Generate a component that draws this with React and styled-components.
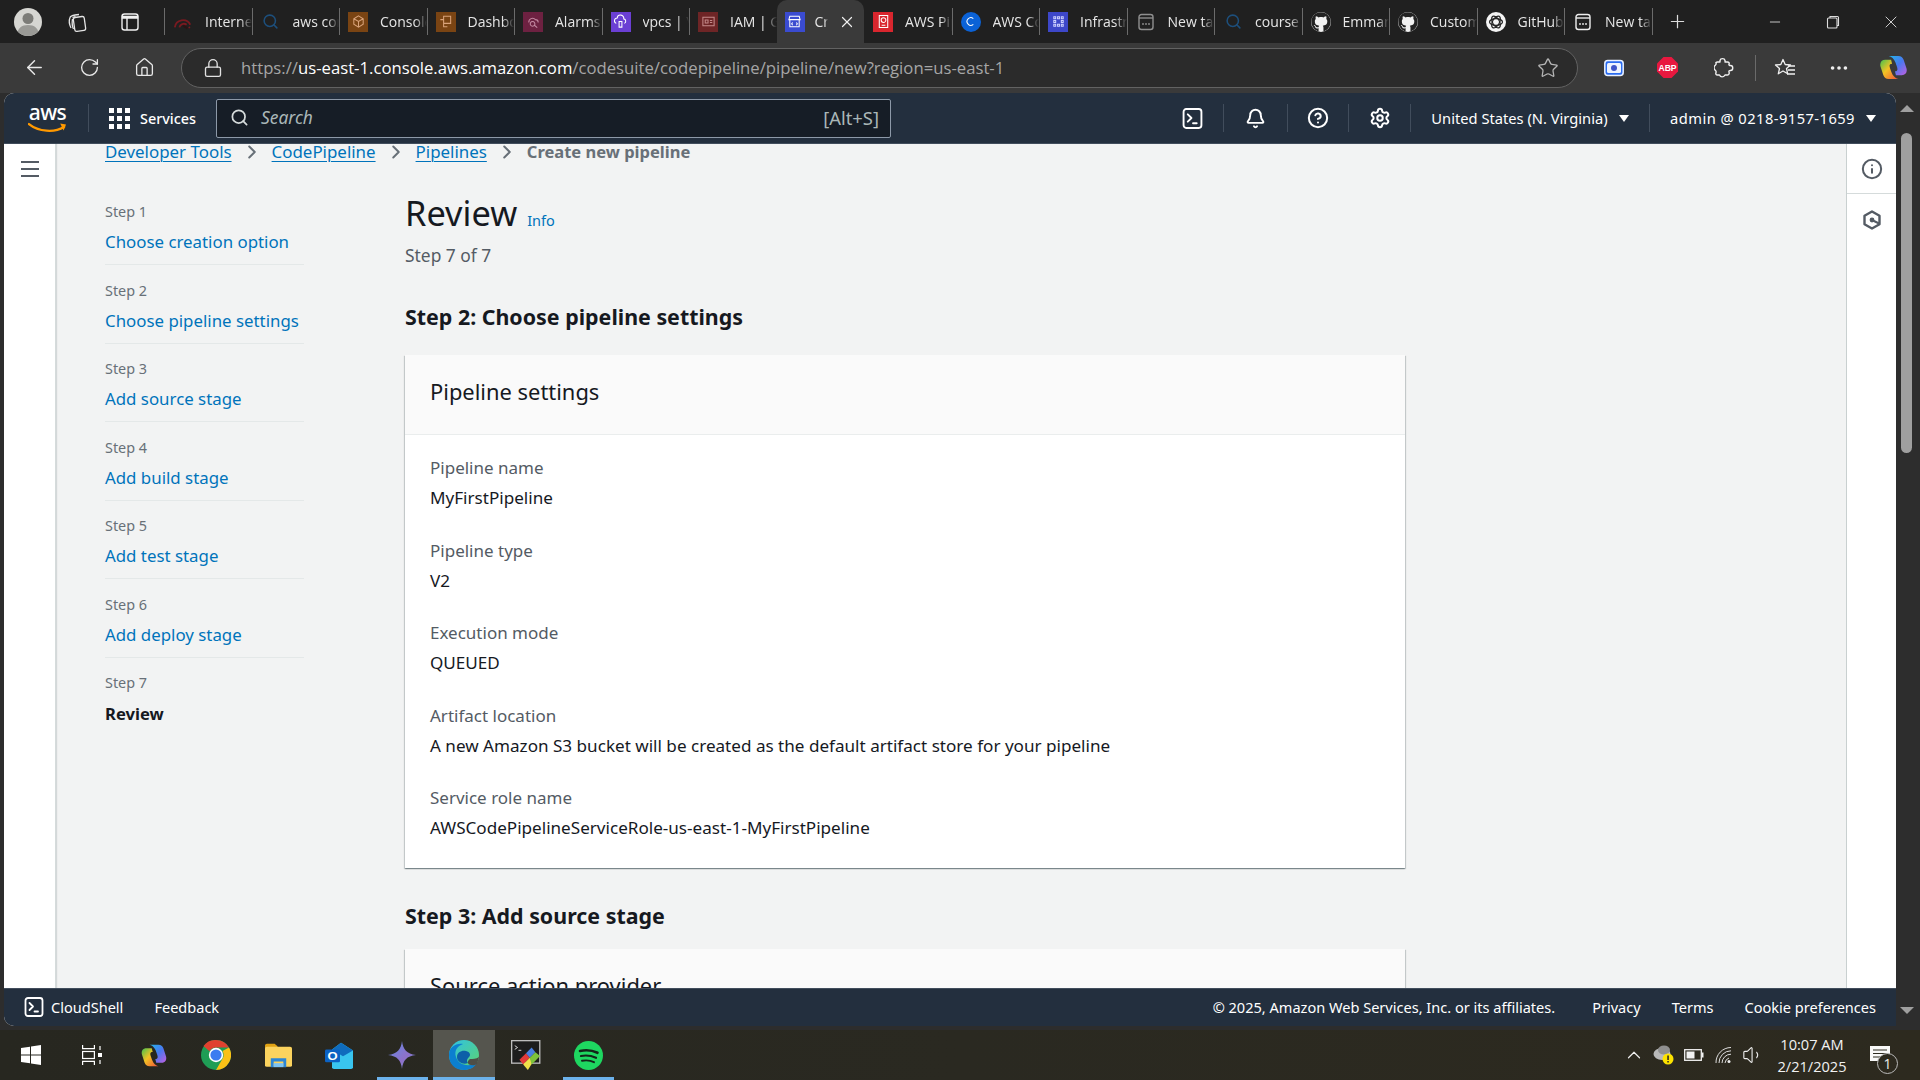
import React from "react";
import styled, { createGlobalStyle } from "styled-components";
import { ArrowLeft, RotateCw, Home, Lock, Star, Ellipsis, X, Plus, Minus, Bell, Settings, CircleHelp, Info, Search, ChevronRight, ChevronUp, Volume1 } from "lucide-react";
import { FaGithub } from "react-icons/fa";

const UI = `"Noto Sans", "Open Sans", sans-serif`;
const SEGOE = `"Open Sans", "Noto Sans", sans-serif`;

const Global = createGlobalStyle`
  html, body { margin: 0; padding: 0; height: 100%; overflow: hidden; background: #3a3a3a; }
  #root { height: 100%; }
  * { box-sizing: border-box; }
`;

const Screen = styled.div`
  width: 1920px; height: 1080px; display: flex; flex-direction: column; overflow: hidden;
  font-family: ${UI}; background: #3a3a3a;
`;

/* ---------- Tab strip ---------- */
const TabBar = styled.div`
  height: 43px; background: #202020; display: flex; align-items: stretch; flex: none;
`;
const WinCluster = styled.div`
  width: 164px; flex: none; display: flex; align-items: center; padding-left: 14px; color: #e8e8e8;
`;
const Avatar = styled.div`
  width: 28px; height: 28px; border-radius: 50%; background: #d6d6d2; overflow: hidden; flex: none;
  svg { display: block; }
`;
const WinIcon = styled.div`
  width: 24px; height: 24px; display: flex; align-items: center; justify-content: center; margin-left: ${p => p.$ml}px;
`;
const Tab = styled.div`
  width: ${p => p.$w || 87.5}px; flex: none; height: 43px; position: relative; display: flex; align-items: center;
  padding-left: ${p => p.$active ? 8 : 9}px; gap: ${p => p.$active ? 10 : 12}px; color: #e6e6e6; font: 400 14px ${SEGOE};
  background: ${p => p.$active ? "#3a3a3a" : "transparent"};
  border-radius: ${p => p.$active ? "10px 10px 0 0" : "0"};
  &::before {
    content: ""; position: absolute; left: 0; top: 8px; height: 27px; width: 1px;
    background: ${p => p.$active || p.$noSep ? "transparent" : "#6b6b6b"};
  }
`;
const TabIconBox = styled.div`
  width: 20px; height: 20px; flex: none; display: flex; align-items: center; justify-content: center;
  background: ${p => p.$bg || "transparent"};
  border-radius: ${p => p.$round ? "50%" : "0"};
`;
const TabLabel = styled.span`
  flex: 1; min-width: 0; overflow: hidden; white-space: nowrap;
  -webkit-mask-image: linear-gradient(90deg, #000 75%, transparent 100%);
  mask-image: linear-gradient(90deg, #000 75%, transparent 100%);
`;
const TabClose = styled.span`
  width: 18px; flex: none; display: flex; margin-right: 8px; color: #eee;
`;
const NewTab = styled.div`
  width: 52px; display: flex; align-items: center; justify-content: center; color: #ddd; position: relative;
  &::before { content: ""; position: absolute; left: 0; top: 8px; height: 27px; width: 1px; background: #6b6b6b; }
`;
const WinControls = styled.div`
  margin-left: auto; display: flex; color: #ddd;
`;
const WinControl = styled.div`
  width: 58px; display: flex; align-items: center; justify-content: center; height: 43px;
`;

/* ---------- Address bar ---------- */
const Toolbar = styled.div`
  height: 50px; flex: none; background: #3a3a3a; display: flex; align-items: center; padding-bottom: 1px; color: #e8e8e8;
`;
const NavButton = styled.div`
  width: ${p => p.$w}px; padding-left: ${p => p.$pl || 0}px; display: flex; justify-content: center; flex: none;
`;
const AddressBar = styled.div`
  width: 1397px; height: 40px; flex: none; margin-left: 9px; border: 1px solid #626262; border-radius: 20px; background: #2b2b2b;
  display: flex; align-items: center; padding: 0 18px 0 21px; color: #e2e2e2;
`;
const Url = styled.div`
  margin-left: 18px; flex: 1; font: 400 16.72px ${SEGOE}; color: #a6a6a6; white-space: nowrap;
  b { font-weight: 400; color: #fff; }
`;
const ExtensionRow = styled.div`
  display: flex; align-items: center; margin-left: 9px; color: #eee; flex: 1;
`;
const Extension = styled.div`
  width: ${p => p.$w}px; display: flex; justify-content: center; flex: none;
`;
const ExtSep = styled.div`
  width: 1px; height: 26px; background: #6a6a6a; flex: none;
`;

/* ---------- Console viewport ---------- */
const Viewport = styled.div`
  flex: 1; min-height: 0; display: flex; padding-left: 4px; background: #2d2d2d;
`;
const ConsoleWin = styled.div`
  flex: 1; min-width: 0; display: flex; flex-direction: column; background: #fff; border-radius: 10px 10px 0 10px; overflow: hidden;
`;
const Scrollbar = styled.div`
  width: 24px; flex: none; background: #2d2d2d; display: flex; flex-direction: column; align-items: center; position: relative;
`;
const ScrollThumb = styled.div`
  width: 11px; height: 320px; margin: 40px 3px 0 0; background: #9f9f9f; border-radius: 6px;
`;
const ScrollArrowUp = styled.div`
  position: absolute; top: 12px; left: 3.5px; width: 0; height: 0;
  border-left: 7px solid transparent; border-right: 7px solid transparent; border-bottom: 7px solid #9f9f9f;
`;
const ScrollArrowDown = styled.div`
  position: absolute; bottom: 12px; left: 3.5px; width: 0; height: 0;
  border-left: 7px solid transparent; border-right: 7px solid transparent; border-top: 7px solid #9f9f9f;
`;

/* ---------- AWS header ---------- */
const AwsHeader = styled.header`
  height: 51px; flex: none; background: #232f3e; display: flex; align-items: center; color: #fff;
  border-bottom: 1px solid #414d5c;
`;
const Logo = styled.div`
  width: 39px; margin-left: 24px; flex: none; display: flex; flex-direction: column; align-items: center; position: relative; height: 32px;
`;
const LogoWord = styled.span`
  font: 500 21px/20px ${UI}; letter-spacing: -0.6px; color: #fff;
`;
const LogoSmile = styled.svg`
  position: absolute; left: 0; bottom: 0;
`;
const HeadSep = styled.div`
  width: 1px; height: 28px; background: #414d5c; flex: none; margin-left: ${p => p.$ml || 0}px;
`;
const ServicesBtn = styled.div`
  display: flex; align-items: center; margin-left: 20px; gap: 10px; font: 500 14.4px ${UI}; width: 107px; flex: none;
`;
const GridIcon = styled.div`
  width: 21px; height: 21px; display: grid; grid-template-columns: repeat(3, 5px); grid-template-rows: repeat(3, 5px); gap: 3px;
  i { background: #fff; display: block; }
`;
const SearchBox = styled.div`
  width: 675px; height: 39px; flex: none; background: #161d26; border: 1px solid #8d99a8; border-radius: 2px;
  display: flex; align-items: center; padding: 0 11px 2px 13px; color: #d5dbdb; gap: 12px;
`;
const SearchHint = styled.span`
  flex: 1; font: italic 400 17.4px ${UI}; color: #aab7b8;
`;
const SearchKey = styled.span`
  font: 400 18.4px ${UI}; color: #aab7b8;
`;
const HeadCell = styled.div`
  width: ${p => p.$w}px; flex: none; display: flex; align-items: center; justify-content: center; height: 28px;
  border-left: 1px solid #414d5c; gap: 6px; font: 400 14.7px ${UI}; white-space: nowrap;
  letter-spacing: ${p => p.$ls || 0}px;
`;
const ShellCell = styled.div`
  flex: 1; height: 28px; display: flex; align-items: center; justify-content: flex-end; padding-right: 20px;
`;
const Caret = styled.span`
  width: 0; height: 0; border-left: 5.5px solid transparent; border-right: 5.5px solid transparent; border-top: 7px solid #fff; margin-left: 5px;
`;

/* ---------- Body ---------- */
const Body = styled.div`
  flex: 1; min-height: 0; display: flex; background: #f2f3f3;
`;
const LeftRail = styled.aside`
  width: 52px; flex: none; background: #fff; border-right: 1px solid #d5dbdb; box-shadow: 1px 0 1px rgba(0,28,36,.12); display: flex; justify-content: center; padding-top: 17px;
`;
const Burger = styled.div`
  width: 18px; height: 16px; display: flex; flex-direction: column; justify-content: space-between;
  i { display: block; height: 2.4px; background: #545b64; }
`;
const RightRail = styled.aside`
  width: 50px; flex: none; background: #fff; border-left: 1px solid #c9d0d0; display: flex; flex-direction: column; color: #545b64;
`;
const RailBtn = styled.div`
  height: ${p => p.$h}px; display: flex; align-items: center; justify-content: center; border-bottom: ${p => p.$line ? "1px solid #d5dbdb" : "0"};
`;
const Main = styled.main`
  flex: 1; min-width: 0; overflow: hidden; padding-left: 49px;
`;
const Crumbs = styled.nav`
  height: 20px; display: flex; align-items: center; gap: 9px; font: 400 16.9px/20px ${UI}; margin-top: -2px; color: #687078;
`;
const CrumbLink = styled.a`
  color: #0073bb; text-decoration: underline; text-underline-offset: 3px; text-decoration-thickness: 1px; white-space: nowrap;
`;
const CrumbCurrent = styled.span`
  color: #687078; font-weight: 700; font-size: 16.5px; white-space: nowrap;
`;
const Columns = styled.div`
  display: flex;
`;
const StepNav = styled.ol`
  width: 199px; flex: none; margin: 38px 101px 0 0; padding: 0; list-style: none;
`;
const StepItem = styled.li`
  height: ${p => p.$last ? 55 : 65}px; margin-bottom: 13.5px; border-bottom: ${p => p.$last ? "0" : "1px solid #e4e8e8"};
`;
const StepLabel = styled.div`
  font: 400 14.4px/24px ${UI}; color: #687078; margin-bottom: ${p => p.$last ? 7 : 6}px;
`;
const StepLink = styled.div`
  font: ${p => p.$current ? 700 : 400} ${p => p.$current ? 16.6 : 16.85}px/24px ${UI}; color: ${p => p.$current ? "#16191f" : "#0073bb"}; white-space: nowrap;
`;
const Content = styled.div`
  width: 1000px; flex: none; padding-top: 29px;
`;
const TitleRow = styled.div`
  display: flex; align-items: baseline; gap: 10px;
`;
const H1 = styled.h1`
  margin: 0; font: 400 34.4px/44px ${UI}; color: #16191f;
`;
const InfoLink = styled.a`
  font: 400 14.5px ${UI}; color: #0073bb;
`;
const Sub = styled.div`
  margin-top: 8px; font: 400 17.4px/24px ${UI}; color: #545b64;
`;
const H2 = styled.h2`
  margin: ${p => p.$top}px 0 ${p => p.$bottom}px; font: 700 21.4px/30px ${UI}; color: #16191f;
`;
const Card = styled.section`
  background: #fff; box-shadow: 0 1px 1px 0 rgba(0,28,36,.3), 1px 1px 1px 0 rgba(0,28,36,.15), -1px 1px 1px 0 rgba(0,28,36,.15);
`;
const CardHead = styled.div`
  height: 80px; padding: 22px 25px 0; background: #fafafa; border-bottom: 1px solid #eaeded; font: 400 21.9px/30px ${UI}; color: #16191f;
`;
const CardBody = styled.div`
  padding: 21px 25px 28px; display: flex; flex-direction: column; gap: 28.6px;
`;
const Field = styled.div`
  display: flex; flex-direction: column; gap: 6px;
`;
const FieldLabel = styled.div`
  font: 400 17px/24px ${UI}; color: #545b64;
`;
const FieldValue = styled.div`
  font: 400 17.1px/24px ${UI}; color: #16191f;
`;

/* ---------- Footer ---------- */
const AwsFooter = styled.footer`
  height: 38px; flex: none; background: #232f3e; display: flex; align-items: center; color: #fff; padding: 0 20px 1px 20px; font: 400 14.55px ${UI};
  border-top: 1px solid #414d5c;
`;
const FootItem = styled.span`
  margin-left: ${p => p.$ml || 0}px; white-space: nowrap; display: flex; align-items: center; gap: 7px;
`;
const FootSpacer = styled.div`
  flex: 1;
`;
const BottomStrip = styled.div`
  height: 4px; flex: none; background: #2d2d2d;
`;

/* ---------- Taskbar ---------- */
const Taskbar = styled.div`
  height: 50px; flex: none; background: linear-gradient(90deg, #272720 0%, #2a2921 50%, #2d2a1f 100%); display: flex; align-items: stretch; color: #fff;
`;
const TaskItem = styled.div`
  width: ${p => p.$w || 62}px; flex: none; display: flex; align-items: center; justify-content: center; position: relative;
  background: ${p => p.$active ? "#55554e" : "transparent"};
  &::after {
    content: ""; position: absolute; bottom: 0; height: 3px; background: #6cb2eb;
    left: ${p => p.$active ? 0 : 5.5}px; right: ${p => p.$active ? 0 : 5.5}px; display: ${p => p.$on || p.$active ? "block" : "none"};
  }
`;
const Tray = styled.div`
  margin-left: auto; display: flex; align-items: center; color: #eee; padding-right: 15px;
`;
const TrayIcon = styled.div`
  width: ${p => p.$w || 30}px; display: flex; justify-content: center; flex: none;
`;
const Clock = styled.div`
  width: 86px; margin-left: 2px; text-align: center; font: 400 14.6px/22px ${SEGOE}; color: #f2f2f2;
`;
const Notify = styled.div`
  width: 50px; display: flex; justify-content: center; position: relative;
`;
const NotifyCount = styled.span`
  position: absolute; right: 7px; bottom: -9px; width: 21px; height: 21px; border-radius: 50%; border: 1px solid #bbb; background: #2d2a1f;
  display: flex; align-items: center; justify-content: center; font: 400 14px ${SEGOE}; color: #eee;
`;

/* ---------- Drawn icons ---------- */
const ShellIcon = ({ size = 20 }) => (
  <svg width={size} height={size} viewBox="0 0 20 20" fill="none" stroke="#fff" strokeWidth="1.8">
    <rect x="1.5" y="1" width="17" height="18" rx="2.5" />
    <path d="M5.5 6l3.5 3.5-3.5 3.5M10.5 14.5h3.5" strokeLinecap="round" strokeLinejoin="round" />
  </svg>
);
const AvatarArt = () => (
  <svg width="28" height="28" viewBox="0 0 28 28"><circle cx="14" cy="10.5" r="5.5" fill="#7c7c78" /><path d="M3 28c0-8 5-11 11-11s11 3 11 11z" fill="#9a9a96" /></svg>
);
const Workspaces = () => (
  <svg width="22" height="22" viewBox="0 0 22 22" fill="none" stroke="#e4e4e4" strokeWidth="1.3">
    <rect x="8" y="6" width="11" height="14" rx="2" transform="rotate(-8 13 13)" />
    <path d="M5 17C3 13 3 9 4 6.5 4.5 5 6 4.5 9 4l4-.5" /><path d="M7.5 18C6 15 6 11 6.5 8M6.5 6.5l3-1" />
  </svg>
);
const TabsIcon = () => (
  <svg width="20" height="20" viewBox="0 0 20 20" fill="none" stroke="#f0f0f0" strokeWidth="1.4">
    <rect x="2" y="2" width="16" height="16" rx="2.5" /><path d="M2.5 4.5h15V6h-15z" fill="#f0f0f0" /><path d="M7 6v12" />
  </svg>
);
const WifiRed = () => (
  <svg width="22" height="20" viewBox="0 0 22 20" fill="none" stroke="#7a1a20" strokeWidth="2">
    <path d="M2 16a9 9 0 0 1 17-3M7 16a5 5 0 0 1 8-3" /><path d="M11 14l5 3" stroke="#2c1214" />
    <circle cx="18" cy="16" r="1" fill="#7a1a20" stroke="none" />
  </svg>
);
const SearchBlue = () => <Search size={17} color="#1d4f7c" strokeWidth={2.2} />;
const Glyph = ({ d, c = "#d9a37a" }) => (
  <svg width="15" height="15" viewBox="0 0 16 16" fill="none" stroke={c} strokeWidth="1.1"><path d={d} /></svg>
);
const DocTab = ({ c = "#8f8f8f" }) => (
  <svg width="18" height="18" viewBox="0 0 18 18" fill="none" stroke={c} strokeWidth="1.4">
    <rect x="2" y="1.5" width="14" height="15" rx="2.5" /><path d="M2 5h14" /><path d="M6 11h.01M9 11h.01M12 11h.01" strokeWidth="1.8" strokeLinecap="round" />
  </svg>
);
const OpenAi = () => (
  <svg width="20" height="20" viewBox="0 0 20 20"><circle cx="10" cy="10" r="10" fill="#f4f4f4" />
    <g fill="none" stroke="#222" strokeWidth="1.2"><ellipse cx="10" cy="10" rx="6.5" ry="3.4" /><ellipse cx="10" cy="10" rx="6.5" ry="3.4" transform="rotate(60 10 10)" /><ellipse cx="10" cy="10" rx="6.5" ry="3.4" transform="rotate(120 10 10)" /></g>
  </svg>
);
const GithubRound = () => (
  <TabIconBox $bg="#f2f2f2" $round><FaGithub size={20} color="#222" /></TabIconBox>
);
const CameraExt = () => (
  <svg width="20" height="18" viewBox="0 0 20 18"><rect x="0.8" y="1.5" width="18.4" height="15" rx="3" fill="#2b6cf0" stroke="#e8f0ff" strokeWidth="1.5" /><rect x="3" y="4" width="14" height="10" rx="1.5" fill="#eef4ff" /><circle cx="10" cy="9" r="3" fill="#3f55c8" /></svg>
);
const AbpExt = () => (
  <svg width="21" height="21" viewBox="0 0 21 21"><path d="M6.5 0h8L21 6.5v8L14.5 21h-8L0 14.5v-8z" fill="#e8183f" /><text x="10.5" y="14" textAnchor="middle" fontFamily="'Liberation Sans',sans-serif" fontWeight="700" fontSize="8.6" fill="#fff">ABP</text></svg>
);
const PuzzleExt = () => (
  <svg width="20" height="22" viewBox="0 0 20 22" fill="none" stroke="#f0f0f0" strokeWidth="1.4" strokeLinejoin="round">
    <path d="M6 3.500c.5-2.500 4.500-2.500 5 0 .2 1 0 1.500 0 1.500h2.500c1.500 0 2 1 1.500 2-.3 1 .5 1.500 1.500 1.500 3 0 3 5 0 5-1 0-1.800.5-1.500 1.500.5 1.500 0 3-1.500 3h-2.500c-1.500 2.500-4.500 2.500-5.500 0H3.500c-1.500 0-2-1-1.500-2.500.5-1.500-.5-2-1-2.500-1.300-1-1.300-3.500 0-4.500.5-.5 1.500-1 1-2.500C1.500 6 2 5 3.500 5H6z" />
  </svg>
);
const FavExt = () => (
  <svg width="22" height="20" viewBox="0 0 22 20" fill="none" stroke="#f0f0f0" strokeWidth="1.3" strokeLinejoin="round">
    <path d="M9 1.500l2.200 5 5.300.5-4 3.500 1.200 5.300L9 13l-4.700 2.800 1.200-5.300-4-3.500 5.300-.5z" /><path d="M14 8h7M14 12h7M13 16h8" />
  </svg>
);
const Copilot = ({ w = 27, h = 27 }) => (
  <svg width={w} height={h} viewBox="0 0 28 28">
    <defs>
      <linearGradient id="cpa" x1="0" y1="0" x2="1" y2="1"><stop offset="0" stopColor="#22b6e8" /><stop offset=".5" stopColor="#4a78f0" /><stop offset="1" stopColor="#c05fe0" /></linearGradient>
      <linearGradient id="cpb" x1="0" y1="0" x2="1" y2="1"><stop offset="0" stopColor="#45c24f" /><stop offset=".45" stopColor="#f3c224" /><stop offset="1" stopColor="#f0503a" /></linearGradient>
    </defs>
    <path d="M9 2h10c3 0 4.500 1.500 5.500 4l3 9c1 4-1 7-5 7h-6l-1-4c3 0 3-2 2-5l-1-3c-1-3-3-7-7.500-8z" fill="url(#cpa)" />
    <path d="M19 26H9c-3 0-4.500-1.500-5.500-4l-3-9c-1-4 1-7 5-7h6l1 4c-3 0-3 2-2 5l1 3c1 3 3 7 7.500 8z" fill="url(#cpb)" />
  </svg>
);
const Chrome = () => (
  <svg width="30" height="30" viewBox="0 0 30 30">
    <circle cx="15" cy="15" r="15" fill="#1f9d55" />
    <path d="M15 0a15 15 0 0 1 13 7.500H15a7.500 7.500 0 0 0-6.500 3.750L2.500 6A15 15 0 0 1 15 0z" fill="#e0412f" />
    <path d="M28 7.500A15 15 0 0 1 15 30l6.500-11.250A7.500 7.500 0 0 0 21.500 11z" fill="#fbc116" />
    <circle cx="15" cy="15" r="7.200" fill="#fff" /><circle cx="15" cy="15" r="5.600" fill="#3b7df0" />
  </svg>
);
const Explorer = () => (
  <svg width="27" height="25" viewBox="0 0 28 31" preserveAspectRatio="none">
    <path d="M0 3a2 2 0 0 1 2-2h8l3 3v4H0z" fill="#e0a214" /><rect y="4.500" width="28" height="25" rx="2" fill="#fbd35e" />
    <path d="M6 19h16v11h-3v-7H9v7H6z" fill="#2b86d6" /><rect x="9" y="25" width="10" height="5" fill="#7cc4f5" />
  </svg>
);
const Outlook = () => (
  <svg width="30" height="27" viewBox="0 0 30 32" preserveAspectRatio="none">
    <path d="M7 9l9-8 12 9v20a2 2 0 0 1-2 2H9a2 2 0 0 1-2-2z" fill="#39c5ef" /><path d="M16 1l12 9-10 7-11-8z" fill="#0f6cbd" />
    <rect y="9" width="15" height="15" rx="1.500" fill="#0b62c4" /><text x="7.500" y="21" textAnchor="middle" fontFamily="'Liberation Sans',sans-serif" fontWeight="700" fontSize="13" fill="#fff">O</text>
  </svg>
);
const Gemini = () => (
  <svg width="28" height="28" viewBox="0 0 30 30">
    <defs><linearGradient id="gm" x1="0" y1="0" x2="1" y2="1"><stop offset="0" stopColor="#5f8de8" /><stop offset=".6" stopColor="#8f70c8" /><stop offset="1" stopColor="#5a9be0" /></linearGradient></defs>
    <path d="M15 0c1 9 5 14 15 15-10 1-14 6-15 15-1-9-5-14-15-15 10-1 14-6 15-15z" fill="url(#gm)" />
  </svg>
);
const Edge = () => (
  <svg width="30" height="30" viewBox="0 0 30 30">
    <defs><linearGradient id="ed" x1="0" y1="0" x2="1" y2="1"><stop offset="0" stopColor="#2ec2e8" /><stop offset="1" stopColor="#5fd36a" /></linearGradient></defs>
    <circle cx="15" cy="15" r="15" fill="url(#ed)" />
    <path d="M0 15C0 7 7 3 14 4 8 6 5 11 7 17c2 7 11 11 21 6-3 5-8 7-13 7C6 30 0 24 0 15z" fill="#0c7fd0" />
    <path d="M8 17c0-5 5-7 9-6 4 1 5 4 3 6-2 2-3 4-1 6-5 2-11-1-11-6z" fill="#0d5fa8" /><path d="M21 19c3 0 6 0 9-2l-2 7c-3 2-6 1-8 .5-2-2-1-4 1-5.500z" fill="#4e4e47" />
  </svg>
);
const AppTerm = () => (
  <svg width="30" height="30" viewBox="0 0 32 32">
    <rect x=".700" y=".700" width="30" height="24" fill="#1d1d1d" stroke="#bdbdbd" strokeWidth="1.400" />
    <path d="M4 6l3 2-3 2M8 11h3" stroke="#ddd" fill="none" strokeWidth="1" />
    <path d="M9 21l7-7 4 5-7 7z" fill="#e23a3a" /><path d="M16 14l6-6 4 5-6 6z" fill="#4a7fe0" /><path d="M13 26l7-7 3 5-5 8z" fill="#f0e04a" /><path d="M20 19l6-6 5 4-9 9z" fill="#7ec23c" />
  </svg>
);
const Spotify = () => (
  <svg width="29" height="29" viewBox="0 0 29 29">
    <circle cx="14.500" cy="14.500" r="14.500" fill="#1ed760" />
    <g fill="none" stroke="#14241a" strokeLinecap="round"><path d="M6 10c6-1.300 12-.8 17.500 1.800" strokeWidth="2.600" /><path d="M7 15c5-1 10-.5 15 1.800" strokeWidth="2.200" /><path d="M8 19.800c4-.7 8.500-.4 12 1.400" strokeWidth="1.900" /></g>
  </svg>
);
const WinLogo = () => (
  <svg width="20" height="20" viewBox="0 0 20 20" fill="#fff"><path d="M0 3l9-1.300v7.800H0zM10 1.500L20 0v9.500H10zM0 10.500h9v7.800L0 17zM10 10.500h10V20l-10-1.500z" /></svg>
);
const TaskView = () => (
  <svg width="20" height="20" viewBox="0 0 20 20" fill="none" stroke="#fff" strokeWidth="1.200"><path d="M.6 0v3.600h11.800V0M.6 20v-3.600h11.800V20" /><rect x=".6" y="6.500" width="11.800" height="7" /><path d="M18 1v4M18 15v4" /><rect x="16" y="8" width="4" height="4" fill="#fff" stroke="none" /></svg>
);
const CloudWarn = () => (
  <svg width="22" height="22" viewBox="0 0 22 22"><ellipse cx="9" cy="10" rx="8.500" ry="6" fill="#b9b9b9" /><ellipse cx="11" cy="6" rx="6" ry="4.500" fill="#8f8f8f" /><circle cx="15" cy="15" r="5.500" fill="#fde300" /><rect x="14.300" y="11.500" width="1.500" height="4.500" fill="#222" /><rect x="14.300" y="17" width="1.500" height="1.500" fill="#222" /></svg>
);
const Battery = () => (
  <svg width="20" height="12" viewBox="0 0 20 12" fill="none"><rect x=".700" y=".700" width="16.600" height="10.600" stroke="#f2f2f2" strokeWidth="1.300" /><rect x="2.500" y="2.500" width="8" height="7" fill="#f2f2f2" /><rect x="18" y="3.500" width="1.500" height="5" fill="#f2f2f2" /></svg>
);
const WifiTray = () => (
  <svg width="18" height="18" viewBox="0 0 18 18" fill="none" stroke="#ddd" strokeWidth="1"><path d="M1 17A15 15 0 0 1 16 1.500M4 17A12 12 0 0 1 16 4.800M7 17A9 9 0 0 1 16 8.200M10 17a6 6 0 0 1 4-5" /><circle cx="14" cy="15.500" r="1.500" fill="#eee" stroke="none" /></svg>
);
const NoteIcon = () => (
  <svg width="20" height="20" viewBox="0 0 20 20"><path d="M0 1h20v15h-6l-3 3v-3H0z" fill="#f8f8f8" /><path d="M3 5h14M3 8.500h14M3 12h14" stroke="#2d2a1f" strokeWidth="1.200" /></svg>
);
const HexIcon = () => (
  <svg width="20" height="20" viewBox="0 0 20 20" fill="none" stroke="#545b64" strokeWidth="2.400" strokeLinejoin="round"><path d="M10 1.500l7.500 4.200v8.600L10 18.500l-7.500-4.200V5.700z" /><circle cx="10" cy="10" r="2.400" fill="#545b64" stroke="none" /><path d="M10 10l7 3.500" stroke="#545b64" strokeWidth="2" /></svg>
);

const tabs = [
  { t: "Internet", icon: <WifiRed /> },
  { t: "aws console", icon: <SearchBlue /> },
  { t: "Console", bg: "#7a4413", icon: <Glyph d="M8 2l5 3v6l-5 3-5-3V5zM3 5l5 3 5-3M8 8v6" /> },
  { t: "Dashboard", bg: "#7a4413", icon: <Glyph d="M6 2.500h7.500V10H6zM2.500 6H6v7.500h4" /> },
  { t: "Alarms", bg: "#6d2141", icon: <Glyph c="#c48aa3" d="M3 9a4 4 0 0 1 7-3 3 3 0 0 1 3 3M7 8a2.500 2.500 0 1 0 .01 0M9 12l3 2.500" /> },
  { t: "vpcs | VPC", bg: "#6b3fd4", icon: <Glyph c="#fff" d="M3.500 10a3 3 0 0 1 1-5.800 3.500 3.500 0 0 1 7 1 2.500 2.500 0 0 1 .5 4.800M6.500 8h3v6h-3z" /> },
  { t: "IAM | Global", bg: "#6e2526", icon: <Glyph c="#c58a8a" d="M2 3.500h12v9H2zM4.500 6.500h3v3h-3zM9.500 7H12M9.500 9H12" /> },
  { t: "Create", active: true, bg: "#3a4bd0", icon: <Glyph c="#fff" d="M3 2.500h10l1 3.500H2zM3 6v7.500h10V6M6 9l-1 1.500L6 12M10 9l1 1.500L10 12" /> },
  { t: "AWS Pipeline", bg: "#d9262e", icon: <Glyph c="#fff" d="M3.500 1.500h9v13h-9zM5.500 6.500a2.500 2.500 0 1 0 5 0 2.500 2.500 0 1 0-5 0M6 12h4" /> },
  { t: "AWS Code", bg: "#0b62d6", round: true, icon: <Glyph c="#fff" d="M11 5a4 4 0 1 0 0 6" /> },
  { t: "Infrastructure", bg: "#3d47c9", icon: <Glyph c="#cfd3ff" d="M3 3h2v2H3zM7 3h2v2H7zM11 3h2v2h-2zM3 7h2v2H3zM11 7h2v2h-2zM3 11h2v2H3zM7 11h2v2H7zM11 11h2v2h-2z" /> },
  { t: "New tab", icon: <DocTab /> },
  { t: "course", icon: <SearchBlue /> },
  { t: "Emmanuel", icon: <GithubRound /> },
  { t: "Custom", icon: <GithubRound /> },
  { t: "GitHub", icon: <OpenAi /> },
  { t: "New tab", icon: <DocTab c="#efefef" /> },
];

const steps = [
  ["Step 1", "Choose creation option"],
  ["Step 2", "Choose pipeline settings"],
  ["Step 3", "Add source stage"],
  ["Step 4", "Add build stage"],
  ["Step 5", "Add test stage"],
  ["Step 6", "Add deploy stage"],
  ["Step 7", "Review"],
];

const fields = [
  ["Pipeline name", "MyFirstPipeline"],
  ["Pipeline type", "V2"],
  ["Execution mode", "QUEUED"],
  ["Artifact location", "A new Amazon S3 bucket will be created as the default artifact store for your pipeline"],
  ["Service role name", "AWSCodePipelineServiceRole-us-east-1-MyFirstPipeline"],
];

const Sep = styled(ChevronRight)`
  color: #687078; flex: none;
`;

export default function App() {
  return (
    <Screen>
      <Global />
      <TabBar>
        <WinCluster>
          <Avatar><AvatarArt /></Avatar>
          <WinIcon $ml={23}><Workspaces /></WinIcon>
          <WinIcon $ml={29}><TabsIcon /></WinIcon>
        </WinCluster>
        {tabs.map((t, i) => (
          <Tab key={i} $active={t.active} $noSep={tabs[i - 1] && tabs[i - 1].active}>
            <TabIconBox $bg={t.bg} $round={t.round}>{t.icon}</TabIconBox>
            <TabLabel>{t.t}</TabLabel>
            {t.active && <TabClose><X size={18} strokeWidth={1.6} /></TabClose>}
          </Tab>
        ))}
        <NewTab><Plus size={21} strokeWidth={1.4} /></NewTab>
        <WinControls>
          <WinControl><Minus size={16} strokeWidth={1.3} /></WinControl>
          <WinControl>
            <svg width="14" height="14" viewBox="0 0 14 14" fill="none" stroke="#ddd" strokeWidth="1.100"><rect x="1.500" y="3" width="9.500" height="10" rx="1" /><path d="M4 3V1.500h7.500a1 1 0 0 1 1 1V10.500H11" /></svg>
          </WinControl>
          <WinControl><X size={20} strokeWidth={1.100} /></WinControl>
        </WinControls>
      </TabBar>

      <Toolbar>
        <NavButton $w={62} $pl={6}><ArrowLeft size={23} strokeWidth={1.5} /></NavButton>
        <NavButton $w={55}><RotateCw size={21} strokeWidth={1.5} /></NavButton>
        <NavButton $w={55}><Home size={21} strokeWidth={1.5} /></NavButton>
        <AddressBar>
          <Lock size={20} strokeWidth={1.6} />
          <Url>https://<b>us-east-1.console.aws.amazon.com</b>/codesuite/codepipeline/pipeline/new?region=us-east-1</Url>
          <Star size={22} strokeWidth={1.4} color="#b5b5b5" />
        </AddressBar>
        <ExtensionRow>
          <Extension $w={54}><CameraExt /></Extension>
          <Extension $w={52}><AbpExt /></Extension>
          <Extension $w={62}><PuzzleExt /></Extension>
          <ExtSep />
          <Extension $w={58}><FavExt /></Extension>
          <Extension $w={50}><Ellipsis size={22} strokeWidth={2} /></Extension>
          <Extension $w={58}><Copilot w={27} h={27} /></Extension>
        </ExtensionRow>
      </Toolbar>

      <Viewport>
        <ConsoleWin>
          <AwsHeader>
            <Logo>
              <LogoWord>aws</LogoWord>
              <LogoSmile width="39" height="12" viewBox="0 0 40 12">
                <path d="M1 2c10 8 26 9 36 3" fill="none" stroke="#ff9900" strokeWidth="2.400" strokeLinecap="round" />
                <path d="M33 1.500l6 1-2.500 6z" fill="#ff9900" />
              </LogoSmile>
            </Logo>
            <HeadSep $ml={21} />
            <ServicesBtn>
              <GridIcon>{Array.from({ length: 9 }).map((_, i) => <i key={i} />)}</GridIcon>
              Services
            </ServicesBtn>
            <SearchBox>
              <Search size={19} strokeWidth={2.2} color="#d5dbdb" />
              <SearchHint>Search</SearchHint>
              <SearchKey>[Alt+S]</SearchKey>
            </SearchBox>
            <ShellCell><ShellIcon size={21} /></ShellCell>
            <HeadCell $w={64}><Bell size={21} strokeWidth={2.2} /></HeadCell>
            <HeadCell $w={61}><CircleHelp size={22} strokeWidth={2.2} /></HeadCell>
            <HeadCell $w={62}><Settings size={22} strokeWidth={2.2} /></HeadCell>
            <HeadCell $w={239}>United States (N. Virginia)<Caret /></HeadCell>
            <HeadCell $w={247} $ls={0.45}>admin @ 0218-9157-1659<Caret /></HeadCell>
          </AwsHeader>

          <Body>
            <LeftRail><Burger><i /><i /><i /></Burger></LeftRail>
            <Main>
              <Crumbs>
                <CrumbLink>Developer Tools</CrumbLink><Sep size={22} strokeWidth={2.2} />
                <CrumbLink>CodePipeline</CrumbLink><Sep size={22} strokeWidth={2.2} />
                <CrumbLink>Pipelines</CrumbLink><Sep size={22} strokeWidth={2.2} />
                <CrumbCurrent>Create new pipeline</CrumbCurrent>
              </Crumbs>
              <Columns>
                <StepNav>
                  {steps.map(([a, b], i) => (
                    <StepItem key={a} $last={i === steps.length - 1}>
                      <StepLabel $last={i === steps.length - 1}>{a}</StepLabel>
                      <StepLink $current={i === steps.length - 1}>{b}</StepLink>
                    </StepItem>
                  ))}
                </StepNav>
                <Content>
                  <TitleRow><H1>Review</H1><InfoLink>Info</InfoLink></TitleRow>
                  <Sub>Step 7 of 7</Sub>
                  <H2 $top={35} $bottom={23}>Step 2: Choose pipeline settings</H2>
                  <Card>
                    <CardHead>Pipeline settings</CardHead>
                    <CardBody>
                      {fields.map(([l, v]) => (
                        <Field key={l}><FieldLabel>{l}</FieldLabel><FieldValue>{v}</FieldValue></Field>
                      ))}
                    </CardBody>
                  </Card>
                  <H2 $top={33} $bottom={18}>Step 3: Add source stage</H2>
                  <Card><CardHead>Source action provider</CardHead></Card>
                </Content>
              </Columns>
            </Main>
            <RightRail>
              <RailBtn $h={50} $line><Info size={22} strokeWidth={2.2} /></RailBtn>
              <RailBtn $h={52}><HexIcon /></RailBtn>
            </RightRail>
          </Body>

          <AwsFooter>
            <FootItem><ShellIcon size={20} />CloudShell</FootItem>
            <FootItem $ml={31}>Feedback</FootItem>
            <FootSpacer />
            <FootItem>© 2025, Amazon Web Services, Inc. or its affiliates.</FootItem>
            <FootItem $ml={37}>Privacy</FootItem>
            <FootItem $ml={31}>Terms</FootItem>
            <FootItem $ml={31}>Cookie preferences</FootItem>
          </AwsFooter>
        </ConsoleWin>
        <Scrollbar>
          <ScrollArrowUp />
          <ScrollThumb />
          <ScrollArrowDown />
        </Scrollbar>
      </Viewport>
      <BottomStrip />

      <Taskbar>
        <TaskItem $w={61}><WinLogo /></TaskItem>
        <TaskItem><TaskView /></TaskItem>
        <TaskItem><Copilot w={28} h={25} /></TaskItem>
        <TaskItem><Chrome /></TaskItem>
        <TaskItem><Explorer /></TaskItem>
        <TaskItem><Outlook /></TaskItem>
        <TaskItem $on><Gemini /></TaskItem>
        <TaskItem $active><Edge /></TaskItem>
        <TaskItem><AppTerm /></TaskItem>
        <TaskItem $on><Spotify /></TaskItem>
        <Tray>
          <TrayIcon><ChevronUp size={22} strokeWidth={1.3} /></TrayIcon>
          <TrayIcon><CloudWarn /></TrayIcon>
          <TrayIcon><Battery /></TrayIcon>
          <TrayIcon><WifiTray /></TrayIcon>
          <TrayIcon $w={28}><Volume1 size={22} strokeWidth={1.2} /></TrayIcon>
          <Clock>10:07 AM<br />2/21/2025</Clock>
          <Notify><NoteIcon /><NotifyCount>1</NotifyCount></Notify>
        </Tray>
      </Taskbar>
    </Screen>
  );
}
